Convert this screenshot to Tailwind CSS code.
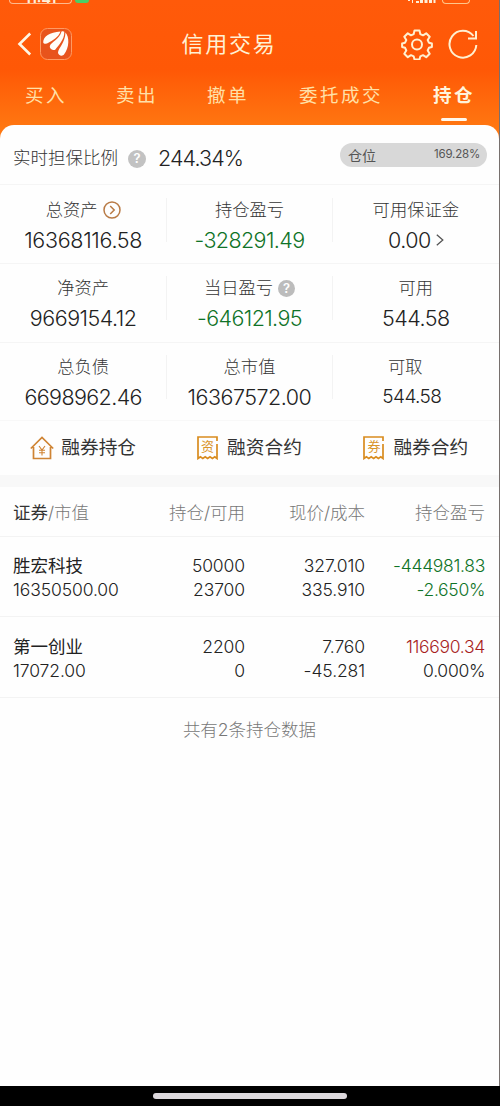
<!DOCTYPE html>
<html lang="zh-CN">
<head>
    <meta charset="UTF-8">
    <meta name="viewport" content="width=device-width, initial-scale=1.0">
    <title>信用交易</title>
    <script src="https://cdn.jsdelivr.net/npm/@tailwindcss/browser@4"></script>
</head>
<body class="bg-black font-['Inter','Noto_Sans_CJK_SC',sans-serif]">
<div class="flex h-[1106px] w-[500px] flex-col overflow-hidden">
    <div class="flex h-[1086px] flex-col border-r border-[#77706e] bg-linear-to-b from-[#ff5a0a] from-0% via-[#ff5806] via-[70px] to-[#ff7a12] to-[135px]">
        <!-- Status bar -->
        <div class="flex h-4 items-start justify-between overflow-hidden pl-[9px] pr-[29px]">
            <div class="flex items-start gap-[3px]">
                <div class="flex h-1 w-[63px] items-end justify-center overflow-hidden rounded-b-md border-x border-b border-[#ffb98c] text-[14px] leading-[9px] font-bold text-[#fff0d8]">11:41</div>
                <div class="h-[3px] w-3.5 rounded-b-full bg-[#49cf68]"></div>
            </div>
            <div class="flex items-start gap-1.5">
                <svg class="h-1 w-7" viewBox="0 0 28 4" fill="#fff0d8"><path d="M0 0h2v1H0zM4 0h1v3H4zM8 1h3v2H8zM12 0h3v3h-3zM16.500 0h3v3h-3zM21 0h3v3h-3zM25.500 0h2v3h-2z"/></svg>
                <div class="h-1 w-7 rounded-b-md border-x-[1.5px] border-b-[1.5px] border-[#ffc68a]"></div>
            </div>
        </div>

        <!-- Title bar -->
        <header class="flex h-[56px] items-center justify-between pl-[17px] pr-[21px] text-[#fff1d4]">
            <div class="flex w-[90px] items-center gap-2">
                <svg class="h-6 w-[15px]" viewBox="0 0 15 24" fill="none" stroke="#fff6e4" stroke-width="2.600"><path d="M13.200 1.500 2.500 12l10.700 10.500"/></svg>
                <svg class="h-8 w-8" viewBox="0 0 32 32" fill="none">
                    <rect x=".5" y=".5" width="31" height="31" rx="7" fill="#e8541c" stroke="#ff9a62"/>
                    <g fill="#fffdf8">
                        <path d="M3.200 14.200C3.200 8.500 9.500 4.200 20.500 3.500 18.500 9.500 12.500 12.500 8 15 6.500 16.200 3.400 16 3.200 14.200Z"/>
                        <path d="M9.800 18.200C11 14 19.500 11.500 21.500 3.600 22.500 3 23.500 3 24.300 3.700 24.500 12 18.500 17 15.200 21.800 13.500 22.800 9.500 21 9.800 18.200Z"/>
                        <path d="M18 24.500C18.500 19.500 25 15.500 25.500 4.500 29.500 9 29.500 19.500 24 26.500 22.500 28.700 18 27.500 18 24.500Z"/>
                    </g>
                </svg>
            </div>
            <h1 class="-ml-[37px] text-[22px] tracking-[1.700px]">信用交易</h1>
            <div class="flex w-[90px] items-center justify-end gap-[15px] pl-2">
                <svg class="h-8 w-8 shrink-0" viewBox="0 0 32 32" fill="none" stroke="#fff0d0" stroke-width="2" stroke-linejoin="round">
                    <path d="M13.500 2.500h5l.8 3.600 2.700 1.200 3.200-2 3.500 3.500-2 3.200 1.200 2.700 3 .8v3.500l-3 .8-1.200 2.700 2 3.200-3.500 3.500-3.200-2-2.700 1.200-.8 3.100h-5l-.8-3.100-2.700-1.200-3.200 2-3.500-3.500 2-3.200-1.200-2.700-3-.8v-3.500l3-.8 1.200-2.700-2-3.200 3.500-3.500 3.200 2 2.700-1.200z"/>
                    <circle cx="16" cy="16.500" r="5"/>
                </svg>
                <svg class="h-8 w-[30px] shrink-0" viewBox="0 0 30 32" fill="none" stroke="#fff0d0" stroke-width="2">
                    <path d="M25.500 8A13.400 13.400 0 1 0 28.300 17M28 3v7.500h-8"/>
                </svg>
            </div>
        </header>

        <!-- Tabs -->
        <nav class="flex h-[53px] pl-[25px] pt-2 text-[18.500px] leading-[31px] tracking-[2.500px] text-[#ffe0a8]">
            <a class="w-[91px]">买入</a>
            <a class="w-[91px]">卖出</a>
            <a class="w-[92px]">撤单</a>
            <a class="w-[134px]">委托成交</a>
            <a class="flex flex-col items-center font-bold text-[#fff4dc]">持仓<span class="mt-[7px] h-[3px] w-[26px] rounded-full bg-[#fff8ec]"></span></a>
        </nav>

        <main class="flex-1 rounded-t-[14px] bg-[#fefefe] font-light text-[#222]">
            <!-- Guarantee ratio -->
            <section class="flex h-[60px] items-center border-b border-[#f5f5f5] pl-[13px] pr-3 pt-[8px]">
                <span class="text-[17.500px] text-[#333]">实时担保比例</span>
                <span class="ml-[10px] flex h-[18px] w-[18px] items-center justify-center rounded-full bg-[#c2c2c2] text-[13px] font-semibold text-white">?</span>
                <span class="ml-[12px] text-[21.500px] tracking-[-0.900px]">244.34%</span>
                <div class="mb-[7px] ml-auto flex h-6 w-[147px] items-center justify-between rounded-full bg-[#d8d8d8] pl-2 pr-[7px] font-normal text-[#555]">
                    <span class="text-[14px]">仓位</span>
                    <span class="text-[11.500px] tracking-[-0.200px]">169.28%</span>
                </div>
            </section>

            <!-- Account summary -->
            <section class="text-center text-[21.500px] leading-[32px]">
                <div class="grid h-[79px] grid-cols-3 items-start border-b border-[#f5f5f5] pt-[13px]">
                    <div>
                        <div class="flex items-center justify-center gap-[5px] text-[17.300px] leading-6 text-[#333]">总资产
                            <svg class="h-[18px] w-[18px]" viewBox="0 0 18 18" fill="none" stroke="#b87a45" stroke-width="1.500"><circle cx="9" cy="9" r="8"/><path d="m7.200 5 4 4-4 4"/></svg>
                        </div>
                        <div class="mt-[2px] tracking-[-0.300px]">16368116.58</div>
                    </div>
                    <div class="relative">
                        <div class="text-[17.300px] leading-6 text-[#333]">持仓盈亏</div>
                        <div class="mt-[2px] tracking-[-0.600px] text-[#0f7327]">-328291.49</div>
                        <div class="absolute inset-x-0 top-0 h-[44px] border-x border-[#f3f3f3]"></div>
                    </div>
                    <div>
                        <div class="text-[17.300px] leading-6 text-[#333]">可用保证金</div>
                        <div class="mt-[2px] flex items-center justify-center gap-[5px] tracking-[-0.500px]">0.00
                            <svg class="h-3 w-2" viewBox="0 0 8 12" fill="none" stroke="#555" stroke-width="1.300"><path d="m.8.8 6 5.200-6 5.200"/></svg>
                        </div>
                    </div>
                </div>
                <div class="grid h-[79px] grid-cols-3 items-start border-b border-[#f5f5f5] pt-3">
                    <div>
                        <div class="text-[17.300px] leading-6 text-[#333]">净资产</div>
                        <div class="mt-[2px] tracking-[-0.500px]">9669154.12</div>
                    </div>
                    <div class="relative">
                        <div class="flex items-center justify-center gap-[5px] text-[17.300px] leading-6 text-[#333]">当日盈亏
                            <span class="flex h-[17px] w-[17px] items-center justify-center rounded-full bg-[#bcbcbc] text-[13px] font-semibold text-white">?</span>
                        </div>
                        <div class="mt-[2px] tracking-[-0.600px] text-[#0f7327]">-646121.95</div>
                        <div class="absolute inset-x-0 top-0 h-[44px] border-x border-[#f3f3f3]"></div>
                    </div>
                    <div>
                        <div class="text-[17.300px] leading-6 text-[#333]">可用</div>
                        <div class="mt-[2px] tracking-[-0.500px]">544.58</div>
                    </div>
                </div>
                <div class="grid h-[78px] grid-cols-3 items-start border-b border-[#f8f8f8] pt-3">
                    <div>
                        <div class="text-[17.300px] leading-6 text-[#333]">总负债</div>
                        <div class="mt-[2px] tracking-[-0.600px]">6698962.46</div>
                    </div>
                    <div class="relative">
                        <div class="text-[17.300px] leading-6 text-[#333]">总市值</div>
                        <div class="mt-[2px] tracking-[-0.500px]">16367572.00</div>
                        <div class="absolute inset-x-0 top-0 h-[44px] border-x border-[#f3f3f3]"></div>
                    </div>
                    <div>
                        <div class="pr-[21px] text-[17.300px] leading-6 text-[#333]">可取</div>
                        <div class="mt-[2px] pr-2 text-[19px] tracking-[-0.600px]">544.58</div>
                    </div>
                </div>
            </section>

            <!-- Shortcuts -->
            <section class="grid h-[54px] grid-cols-3 items-center pt-px text-[18.700px] font-normal text-[#333]">
                <a class="flex items-center justify-center gap-[7px]">
                    <svg class="h-6 w-6" viewBox="0 0 24 24" fill="none" stroke="#cf8434" stroke-width="1.700"><path d="M.8 12.500 12 1.500l11.200 11M3.500 11v11.500h17V11"/><path stroke-width="1.100" d="m9 10 3 4 3-4M9 14.200h6M9 16.800h6M12 14v5.500"/></svg>
                    <span>融券持仓</span>
                </a>
                <a class="flex items-center justify-center gap-[9px]">
                    <span class="relative h-6 w-[21px] text-center text-[13px] leading-[21px] text-[#d9952b]">
                        <svg class="absolute inset-0 h-6 w-[21px]" viewBox="0 0 21 24" fill="none" stroke="#d98c1f" stroke-width="1.700"><path d="M20 5V1H1v21.500l2.400-1.700 2.400 1.700 2.400-1.700 2.400 1.700 2.400-1.700 2.400 1.700 2.400-1.700L20 22.500V8"/></svg>资</span>
                    <span>融资合约</span>
                </a>
                <a class="flex items-center justify-center gap-[9px]">
                    <span class="relative h-6 w-[21px] text-center text-[13px] leading-[21px] text-[#d9952b]">
                        <svg class="absolute inset-0 h-6 w-[21px]" viewBox="0 0 21 24" fill="none" stroke="#d98c1f" stroke-width="1.700"><path d="M20 5V1H1v21.500l2.400-1.700 2.400 1.700 2.400-1.700 2.400 1.700 2.400-1.700 2.400 1.700 2.400-1.700L20 22.500V8"/></svg>券</span>
                    <span>融券合约</span>
                </a>
            </section>
            <div class="h-3 bg-[#f8f8f8]"></div>

            <!-- Positions -->
            <section class="text-right text-[17.500px] leading-[24px] tracking-[-0.100px]">
                <div class="grid h-[50px] grid-cols-[125px_107px_120px_120px] items-center border-b border-[#f3f3f3] pl-[13px] pt-0.5 text-[17.500px] tracking-normal text-[#777]">
                    <div class="text-left"><span class="font-normal text-[#333]">证券</span>/市值</div>
                    <div>持仓/可用</div>
                    <div>现价/成本</div>
                    <div>持仓盈亏</div>
                </div>
                <div class="grid h-[80px] grid-cols-[125px_107px_120px_120px] border-b border-[#f3f3f3] pl-[13px] pt-[17px]">
                    <div class="text-left"><p class="font-normal tracking-normal">胜宏科技</p><p>16350500.00</p></div>
                    <div><p>50000</p><p>23700</p></div>
                    <div><p>327.010</p><p>335.910</p></div>
                    <div class="tracking-[-0.300px] text-[#0f7327]"><p>-444981.83</p><p>-2.650%</p></div>
                </div>
                <div class="grid h-[81px] grid-cols-[125px_107px_120px_120px] border-b border-[#f3f3f3] pl-[13px] pt-[18px]">
                    <div class="text-left"><p class="font-normal tracking-normal">第一创业</p><p>17072.00</p></div>
                    <div><p>2200</p><p>0</p></div>
                    <div><p>7.760</p><p>-45.281</p></div>
                    <div class="tracking-[-0.300px]"><p class="text-[#a81f1f]">116690.34</p><p>0.000%</p></div>
                </div>
            </section>
            <p class="pt-5 text-center text-[17.500px] leading-6 text-[#777]">共有2条持仓数据</p>
        </main>
    </div>

    <!-- Home indicator -->
    <div class="flex h-5 justify-center bg-black pt-[7px]">
        <div class="h-[6px] w-[194px] rounded-full bg-[#dcd8dc]"></div>
    </div>
</div>
</body>
</html>
